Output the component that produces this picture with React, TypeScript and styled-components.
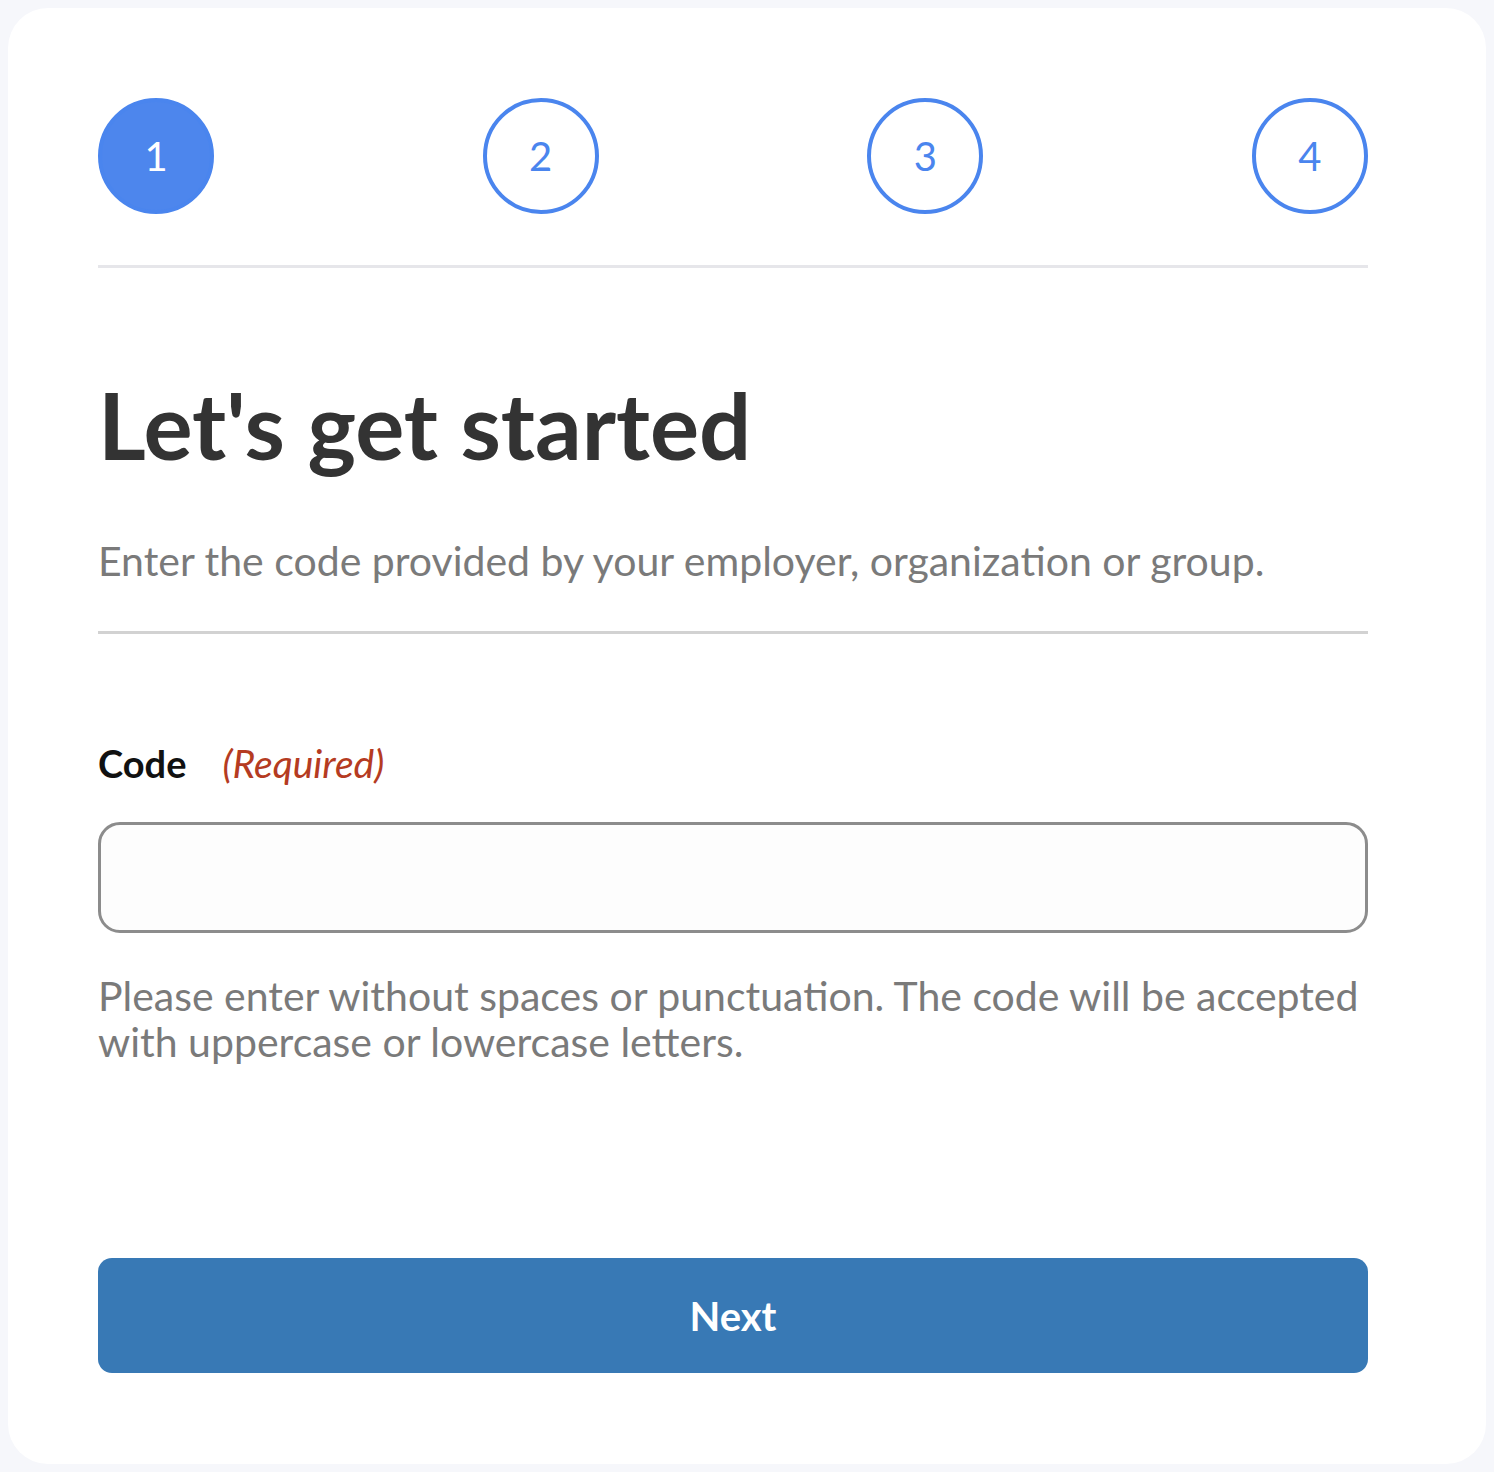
import React from "react";
import styled, { createGlobalStyle } from "styled-components";

const Global = createGlobalStyle`
  html, body { margin: 0; padding: 0; background: #f6f7fb; }
  body { font-family: "Lato", "Noto Sans", sans-serif; }
  * { box-sizing: border-box; }
`;

const Page = styled.div`
  padding: 8px;
  min-height: 1472px;
`;

const Card = styled.div`
  background: #ffffff;
  border-radius: 40px;
  height: 1456px;
  padding: 90px 118px 0 90px;
  display: flex;
  flex-direction: column;
`;

const Stepper = styled.div`
  display: flex;
  justify-content: space-between;
  align-items: center;
`;

const Step = styled.div<{ $active?: boolean }>`
  width: 116px;
  height: 116px;
  border-radius: 50%;
  border: 4px solid #4a85ee;
  background: ${(p) => (p.$active ? "#4d86ed" : "#ffffff")};
  color: ${(p) => (p.$active ? "#ffffff" : "#4a85ee")};
  display: flex;
  align-items: center;
  justify-content: center;
  font-family: "Lato", sans-serif;
  font-weight: 400;
  font-size: 40px;
`;

const Divider = styled.hr<{ $color: string; $top: number; $bottom: number }>`
  border: none;
  height: 3px;
  background: ${(p) => p.$color};
  margin: ${(p) => p.$top}px 0 ${(p) => p.$bottom}px;
`;

const Title = styled.h1`
  margin: 0;
  font-family: "Lato", sans-serif;
  font-weight: 700;
  font-size: 92px;
  line-height: 110px;
  color: #333333;
`;

const Subtitle = styled.p`
  margin: 56px 0 0;
  font-family: "Lato", sans-serif;
  font-size: 41px;
  line-height: 50px;
  color: #7a7a7a;
`;

const LabelRow = styled.div`
  display: flex;
  align-items: baseline;
  gap: 36px;
`;

const Label = styled.label`
  font-family: "Lato", sans-serif;
  font-weight: 700;
  font-size: 38px;
  line-height: 46px;
  color: #111111;
`;

const Required = styled.span`
  font-family: "Lato", sans-serif;
  font-style: italic;
  font-size: 39px;
  color: #b53b22;
`;

const Input = styled.input`
  margin-top: 36px;
  width: 100%;
  height: 111px;
  border: 3px solid #8c8c8c;
  border-radius: 22px;
  background: #fdfdfd;
  font-size: 40px;
  padding: 0 28px;
  outline: none;
`;

const Help = styled.p`
  margin: 40px 0 0;
  font-family: "Lato", sans-serif;
  font-size: 41px;
  line-height: 46px;
  color: #7a7a7a;
`;

const Button = styled.button`
  margin-top: auto;
  margin-bottom: 91px;
  width: 100%;
  height: 115px;
  border: none;
  border-radius: 14px;
  background: #3879b5;
  color: #ffffff;
  font-family: "Lato", sans-serif;
  font-weight: 700;
  font-size: 40px;
  cursor: pointer;
`;

export default function App() {
  return (
    <Page>
      <Global />
      <Card>
        <Stepper>
          <Step $active>1</Step>
          <Step>2</Step>
          <Step>3</Step>
          <Step>4</Step>
        </Stepper>
        <Divider $color="#e6e6ea" $top={51} $bottom={102} />
        <Title>Let's get started</Title>
        <Subtitle>Enter the code provided by your employer, organization or group.</Subtitle>
        <Divider $color="#d2d2d2" $top={45} $bottom={106} />
        <LabelRow>
          <Label htmlFor="code">Code</Label>
          <Required>(Required)</Required>
        </LabelRow>
        <Input id="code" type="text" />
        <Help>
          Please enter without spaces or punctuation. The code will be accepted with uppercase or
          lowercase letters.
        </Help>
        <Button>Next</Button>
      </Card>
    </Page>
  );
}
